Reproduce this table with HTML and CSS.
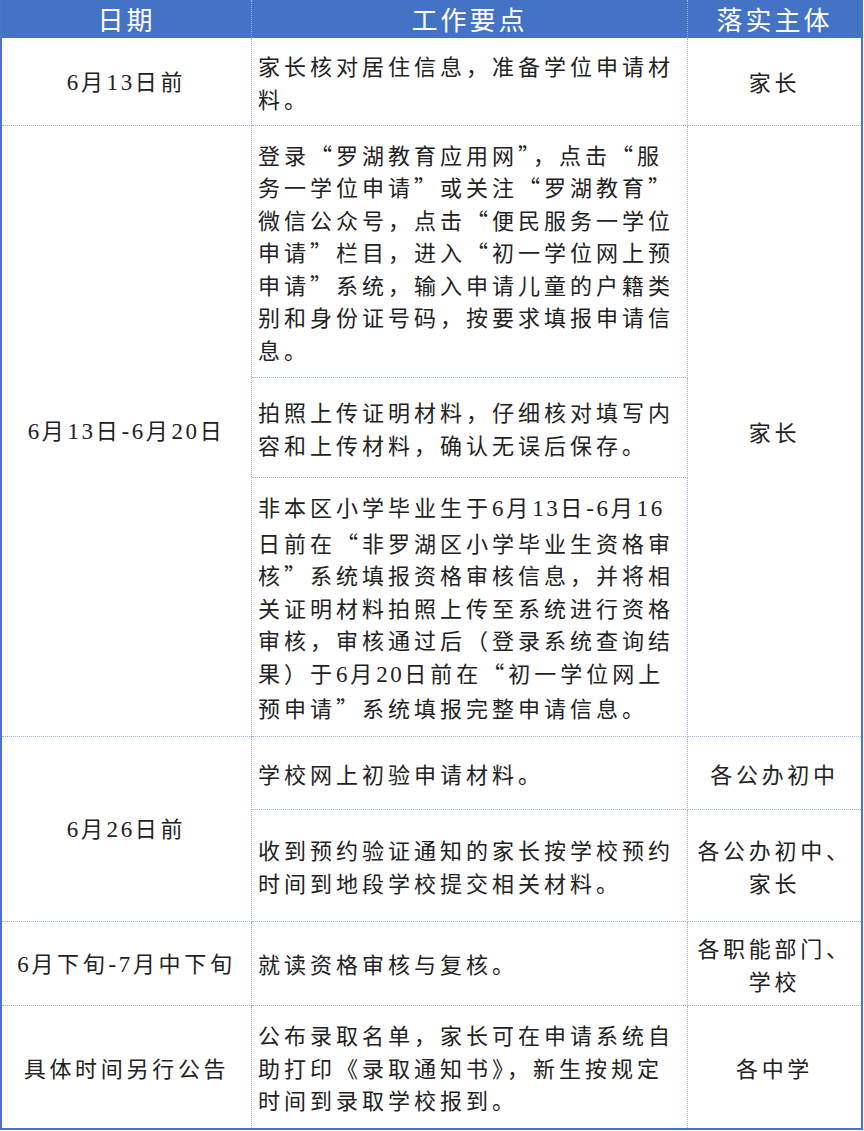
FILE: index.html
```html
<!DOCTYPE html>
<html lang="zh-CN">
<head>
<meta charset="utf-8">
<title>初一学位申请时间安排</title>
<link rel="stylesheet" href="styles.css">
</head>
<body>
<div class="sheet">
  <div class="cell head c1"><div class="txt">日期</div></div>
  <div class="cell head c2"><div class="txt">工作要点</div></div>
  <div class="cell head c3"><div class="txt">落实主体</div></div>

  <div class="cell date r1"><div class="txt"><span class="num">6</span>月<span class="num">13</span>日前</div></div>
  <div class="cell task r1"><div class="txt">家长核对居住信息，准备学位申请材<br>料。</div></div>
  <div class="cell who r1"><div class="txt">家长</div></div>

  <div class="cell date r2"><div class="txt"><span class="num">6</span>月<span class="num">13</span>日<span class="num">-6</span>月<span class="num">20</span>日</div></div>
  <div class="cell task r2a"><div class="txt">登录“罗湖教育应用网”，点击“服<br>务一学位申请”或关注“罗湖教育”<br>微信公众号，点击“便民服务一学位<br>申请”栏目，进入“初一学位网上预<br>申请”系统，输入申请儿童的户籍类<br>别和身份证号码，按要求填报申请信<br>息。</div></div>
  <div class="cell who r2"><div class="txt">家长</div></div>
  <div class="cell task r2b"><div class="txt">拍照上传证明材料，仔细核对填写内<br>容和上传材料，确认无误后保存。</div></div>
  <div class="cell task r2c"><div class="txt">非本区小学毕业生于<span class="num">6</span>月<span class="num">13</span>日<span class="num">-6</span>月<span class="num">16</span><br>日前在“非罗湖区小学毕业生资格审<br>核”系统填报资格审核信息，并将相<br>关证明材料拍照上传至系统进行资格<br>审核，审核通过后（登录系统查询结<br>果）于<span class="num">6</span>月<span class="num">20</span>日前在“初一学位网上<br>预申请”系统填报完整申请信息。</div></div>

  <div class="cell date r3"><div class="txt"><span class="num">6</span>月<span class="num">26</span>日前</div></div>
  <div class="cell task r3a"><div class="txt">学校网上初验申请材料。</div></div>
  <div class="cell who r3a"><div class="txt">各公办初中</div></div>
  <div class="cell task r3b"><div class="txt">收到预约验证通知的家长按学校预约<br>时间到地段学校提交相关材料。</div></div>
  <div class="cell who r3b"><div class="txt">各公办初中、<br>家长</div></div>

  <div class="cell date r4"><div class="txt"><span class="num">6</span>月下旬<span class="num">-7</span>月中下旬</div></div>
  <div class="cell task r4"><div class="txt">就读资格审核与复核。</div></div>
  <div class="cell who r4"><div class="txt">各职能部门、<br>学校</div></div>

  <div class="cell date r5 last"><div class="txt">具体时间另行公告</div></div>
  <div class="cell task r5 last"><div class="txt">公布录取名单，家长可在申请系统自<br>助打印《录取通知书》，新生按规定<br>时间到录取学校报到。</div></div>
  <div class="cell who r5 last"><div class="txt">各中学</div></div>
</div>
</body>
</html>
```

FILE: styles.css
```css
* {
  box-sizing: border-box;
}

html, body {
  margin: 0;
  padding: 0;
  background: #ffffff;
}

.sheet {
  width: 863px;
  display: grid;
  grid-template-columns: 250px 436px 173px;
  grid-template-rows: 38px 88px 252px 100px 259px 73px 112px 84px 122px;
  border-left: 2px solid #4a74c6;
  border-right: 2px solid #4a74c6;
  border-bottom: 2px solid #4a74c6;
  font-family: "Noto Sans CJK SC", "Noto Sans", sans-serif;
  color: #222222;
  font-size: 22px;
  letter-spacing: 3.7px;
  line-height: 32.5px;
}

.num {
  font-family: "Liberation Serif", "Noto Sans CJK SC", serif;
  font-size: 23px;
  letter-spacing: 2.6px;
}

.cell {
  display: flex;
  align-items: center;
  border-bottom: 1px dotted #9bb2dc;
}

.txt {
  white-space: nowrap;
}

.c1, .c2, .date, .task {
  border-right: 1px dotted #9bb2dc;
}

.head {
  background: #4472c4;
  color: #ffffff;
  font-size: 26px;
  letter-spacing: 3px;
  justify-content: center;
  border-bottom: none;
  line-height: 38px;
}

.head.c1, .head.c2 {
  border-right: 1px dotted #9db5e3;
}

.date {
  grid-column: 1;
  justify-content: center;
  text-align: center;
}

.task {
  grid-column: 2;
  padding: 0 4px 0 6px;
  text-align: left;
  letter-spacing: 4px;
}

.who {
  grid-column: 3;
  justify-content: center;
  text-align: center;
}

.r1 { grid-row: 2; }
.r2 { grid-row: 3 / 6; }
.r2a { grid-row: 3; }
.r2b { grid-row: 4; }
.r2c { grid-row: 5; }
.r3 { grid-row: 6 / 8; }
.r3a { grid-row: 6; }
.r3b { grid-row: 7; }
.r4 { grid-row: 8; }
.r5 { grid-row: 9; }

.last {
  border-bottom: none;
}
```
